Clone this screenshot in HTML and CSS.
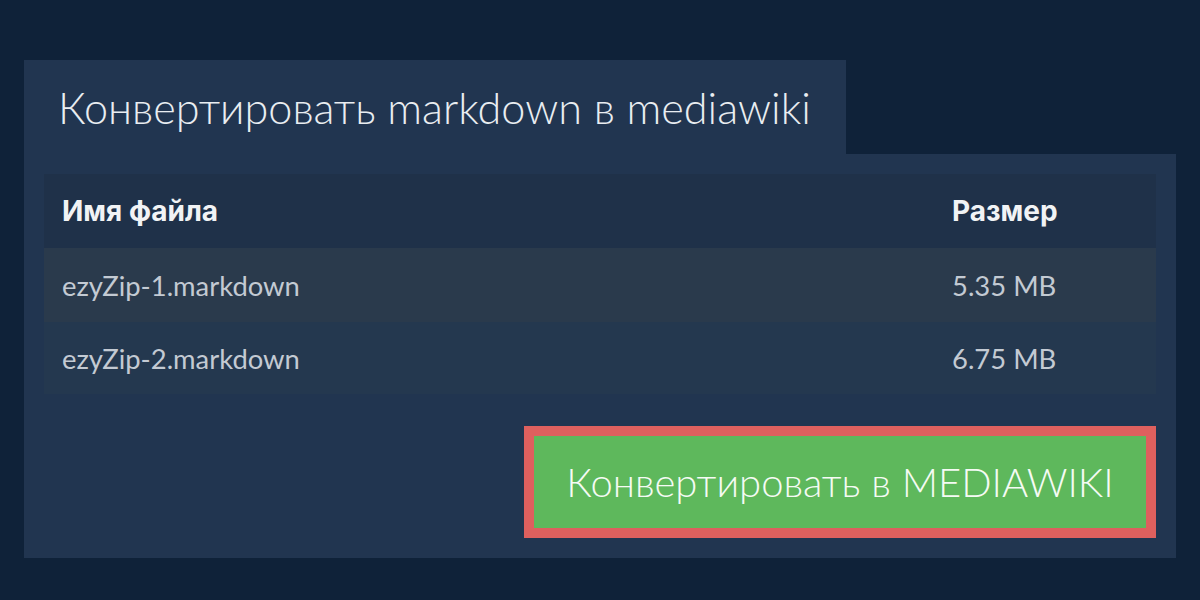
FILE: index.html
```html
<!DOCTYPE html>
<html lang="ru">
<head>
<meta charset="utf-8">
<link rel="stylesheet" href="styles.css">
</head>
<body>
<div class="page">
  <div class="tab"><h1 class="title">Конвертировать markdown в mediawiki</h1></div>
  <div class="panel">
    <div class="table">
      <div class="row head"><div class="c1">Имя файла</div><div class="c2">Размер</div></div>
      <div class="row odd"><div class="c1">ezyZip-1.markdown</div><div class="c2">5.35 MB</div></div>
      <div class="row even"><div class="c1">ezyZip-2.markdown</div><div class="c2">6.75 MB</div></div>
    </div>
    <div class="actions">
      <button class="convert">Конвертировать в MEDIAWIKI</button>
    </div>
  </div>
</div>
</body>
</html>
```
FILE: styles.css
```css
html, body { margin: 0; padding: 0; }
body { background: #0f2239; width: 1200px; height: 600px; overflow: hidden; font-family: Lato, "Noto Sans", sans-serif; }
.page { padding: 60px 24px 0 24px; }
.tab { width: 822px; height: 94px; background: #213550; box-sizing: border-box; padding-left: 34px; display: flex; align-items: center; }
.title { margin: 0; font-weight: 300; font-size: 43.2px; color: #e9edf1; letter-spacing: 0; }
.panel { background: #213550; padding: 20px; }
.table { display: flex; flex-direction: column; }
.row { display: grid; grid-template-columns: 908px 1fr; align-items: center; font-size: 27.4px; }
.row .c1 { padding-left: 18px; }
.head { height: 74px; background: #1f3149; color: #f1f3f5; font-family: Inter, Lato, sans-serif; font-weight: 700; font-size: 28px; }
.odd { height: 74px; background: #2a3a4c; color: #c3cad3; }
.even { height: 72px; background: #24384f; color: #c3cad3; }
.actions { display: flex; justify-content: flex-end; margin-top: 32px; }
.convert { width: 632px; height: 112px; border: 10px solid #de605e; background: #5eb85c; color: #f5fbf4; font-family: Lato, "Noto Sans", sans-serif; font-weight: 300; font-size: 40px; padding: 0; }
```
